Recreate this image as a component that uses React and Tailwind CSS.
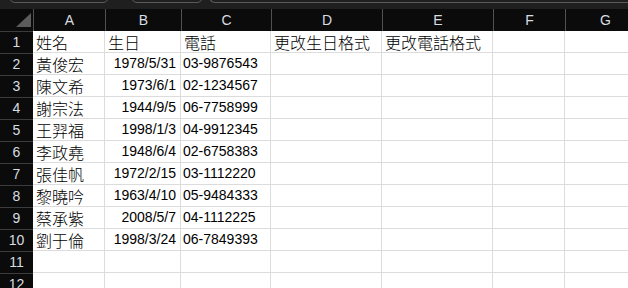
import React from "react";

const cols = [
  { k: "A", w: "w-[72px]" },
  { k: "B", w: "w-[76px]" },
  { k: "C", w: "w-[90px]" },
  { k: "D", w: "w-[111px]" },
  { k: "E", w: "w-[111px]" },
  { k: "F", w: "w-[72px]" },
  { k: "G", w: "w-[80px]" },
];

const data = [
  ["姓名", "生日", "電話", "更改生日格式", "更改電話格式"],
  ["黃俊宏", "1978/5/31", "03-9876543"],
  ["陳文希", "1973/6/1", "02-1234567"],
  ["謝宗法", "1944/9/5", "06-7758999"],
  ["王羿福", "1998/1/3", "04-9912345"],
  ["李政堯", "1948/6/4", "02-6758383"],
  ["張佳帆", "1972/2/15", "03-1112220"],
  ["黎曉吟", "1963/4/10", "05-9484333"],
  ["蔡承紫", "2008/5/7", "04-1112225"],
  ["劉于倫", "1998/3/24", "06-7849393"],
  [],
  [],
];

const cjk = "font-['Noto_Sans_CJK_TC','Noto_Sans_CJK_SC',sans-serif] font-light";
const num = "font-['Liberation_Sans',sans-serif]";

export default function App() {
  return (
    <div className="w-[628px] h-[288px] overflow-hidden bg-white">
      {/* top strip */}
      <div className="h-[9px] bg-[#1f1f1f] overflow-hidden flex">
        <div className="ml-[9px] w-[100px] h-[24px] -mt-[21px] rounded-md border border-[#5a5a5a]" />
        <div className="ml-[22px] w-[72px] h-[24px] -mt-[21px] rounded-md border border-[#5a5a5a]" />
        <div className="ml-[6px] flex-1 h-[24px] -mt-[21px] rounded-l-md border border-r-0 border-[#5a5a5a]" />
      </div>
      {/* column headers */}
      <div className={`flex h-[22px] bg-[#0b0b0b] ${num}`}>
        <div className="w-[33px] shrink-0 relative">
          <svg width="33" height="22" className="absolute left-0 top-0">
            <polygon points="16,18 31,18 31,4" fill="#5c5c5c" />
          </svg>
        </div>
        {cols.map((c) => (
          <div
            key={c.k}
            className={`${c.w} shrink-0 border-l border-[#505050] flex items-center justify-center text-[14px] text-[#d8dde2]`}
          >
            {c.k}
          </div>
        ))}
      </div>
      {/* rows */}
      {data.map((row, i) => (
        <div key={i} className="flex h-[22px]">
          <div
            className={`w-[33px] shrink-0 bg-[#0b0b0b] border-t border-[#3c3c3c] flex items-center justify-center text-[14px] text-[#d8dde2] ${num}`}
          >
            {i + 1}
          </div>
          {cols.map((c, j) => {
            const v = row[j];
            const isDate = i > 0 && j === 1;
            const isNumText = i > 0 && j === 2;
            return (
              <div
                key={c.k}
                className={`${c.w} shrink-0 border-r border-b border-[#dcdcdc] flex items-center whitespace-nowrap overflow-visible text-black ${
                  isDate
                    ? `justify-end pr-[4px] ${num} text-[14px]`
                    : isNumText
                    ? `pl-[2px] ${num} text-[14px]`
                    : `pl-[3px] ${cjk} text-[16px]`
                }`}
              >
                {v}
              </div>
            );
          })}
        </div>
      ))}
    </div>
  );
}
